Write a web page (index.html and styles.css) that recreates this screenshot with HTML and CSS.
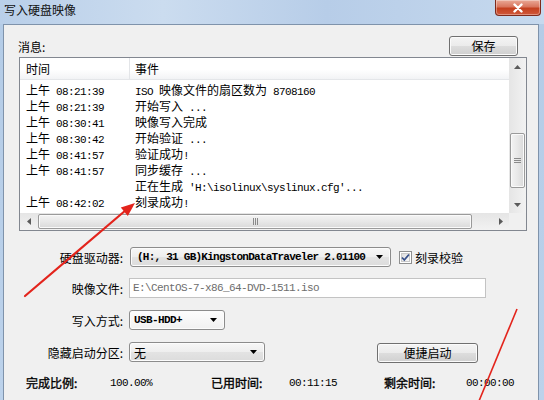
FILE: index.html
```html
<!DOCTYPE html>
<html>
<head>
<meta charset="utf-8">
<title>写入硬盘映像</title>
<link rel="stylesheet" href="styles.css">
</head>
<body>
<div class="window">
  <div class="titlebar">
    <span class="title">写入硬盘映像</span>
    <div class="close">
      <svg width="14" height="10" viewBox="0 0 14 10"><path d="M3.5 1.5 L10.5 8.5 M10.5 1.5 L3.5 8.5" stroke="#fff" stroke-width="2.4" stroke-linecap="round"/></svg>
    </div>
  </div>
  <div class="frame">
    <div class="msg-head">
      <span>消息:</span>
      <div class="btn save">保存</div>
    </div>
    <div class="list">
      <div class="lv">
        <div class="lv-head"><div class="c1">时间</div><div class="c2">事件</div></div>
        <div class="lv-rows">
          <div class="row"><div class="c1">上午<span class="m"> 08:21:39</span></div><div class="c2"><span class="m">ISO </span>映像文件的扇区数为<span class="m"> 8708160</span></div></div>
          <div class="row"><div class="c1">上午<span class="m"> 08:21:39</span></div><div class="c2">开始写入<span class="m"> ...</span></div></div>
          <div class="row"><div class="c1">上午<span class="m"> 08:30:41</span></div><div class="c2">映像写入完成</div></div>
          <div class="row"><div class="c1">上午<span class="m"> 08:30:42</span></div><div class="c2">开始验证<span class="m"> ...</span></div></div>
          <div class="row"><div class="c1">上午<span class="m"> 08:41:57</span></div><div class="c2">验证成功<span class="m">!</span></div></div>
          <div class="row"><div class="c1">上午<span class="m"> 08:41:57</span></div><div class="c2">同步缓存<span class="m"> ...</span></div></div>
          <div class="row"><div class="c1"></div><div class="c2">正在生成<span class="m"> 'H:\isolinux\syslinux.cfg'...</span></div></div>
          <div class="row"><div class="c1">上午<span class="m"> 08:42:02</span></div><div class="c2">刻录成功<span class="m">!</span></div></div>
        </div>
      </div>
      <div class="vscroll">
        <div class="sb-btn"><svg width="7" height="4" viewBox="0 0 7 4"><path d="M0 4 L3.5 0 L7 4 Z" fill="#5a5a5a"/></svg></div>
        <div class="v-track">
          <div class="v-thumb">
            <svg width="7" height="5" viewBox="0 0 7 5"><path d="M0 0.5 H7 M0 2.5 H7 M0 4.5 H7" stroke="#8a8a8a" stroke-width="1"/></svg>
          </div>
        </div>
        <div class="sb-btn"><svg width="7" height="4" viewBox="0 0 7 4"><path d="M0 0 L7 0 L3.5 4 Z" fill="#5a5a5a"/></svg></div>
      </div>
      <div class="hscroll">
        <div class="sb-btn"><svg width="4" height="7" viewBox="0 0 4 7"><path d="M4 0 L0 3.5 L4 7 Z" fill="#5a5a5a"/></svg></div>
        <div class="h-track">
          <div class="h-thumb">
            <svg width="5" height="7" viewBox="0 0 5 7"><path d="M0.5 0 V7 M2.5 0 V7 M4.5 0 V7" stroke="#8a8a8a" stroke-width="1"/></svg>
          </div>
        </div>
        <div class="sb-btn"><svg width="4" height="7" viewBox="0 0 4 7"><path d="M0 0 L4 3.5 L0 7 Z" fill="#5a5a5a"/></svg></div>
      </div>
      <div class="corner"></div>
    </div>

    <div class="frow r1">
      <span class="flabel">硬盘驱动器:</span>
      <div class="combo drive"><span class="m b">(H:, 31 GB)KingstonDataTraveler 2.01100</span><svg class="dd" width="7" height="4" viewBox="0 0 7 4"><path d="M0 0 L7 0 L3.5 4 Z" fill="#000"/></svg></div>
      <div class="check">
        <svg width="13" height="13" viewBox="0 0 13 13">
          <defs><linearGradient id="cg" x1="0" y1="0" x2="1" y2="1"><stop offset="0" stop-color="#dcdcdc"/><stop offset="1" stop-color="#fbfbfb"/></linearGradient></defs>
          <rect x="0.5" y="0.5" width="12" height="12" fill="#fff" stroke="#8e8f8f"/>
          <rect x="2.5" y="2.5" width="8" height="8" fill="url(#cg)" stroke="#c9c9c9"/>
          <path d="M3 6.5 L5.3 9 L10 3.5" fill="none" stroke="#37508a" stroke-width="1.8"/>
        </svg>
        <span>刻录校验</span>
      </div>
    </div>
    <div class="frow r2">
      <span class="flabel">映像文件:</span>
      <div class="input"><span class="m">E:\CentOS-7-x86_64-DVD-1511.iso</span></div>
    </div>
    <div class="frow r3">
      <span class="flabel">写入方式:</span>
      <div class="combo mode"><span class="m b">USB-HDD+</span><svg class="dd" width="7" height="4" viewBox="0 0 7 4"><path d="M0 0 L7 0 L3.5 4 Z" fill="#000"/></svg></div>
    </div>
    <div class="frow r4">
      <span class="flabel">隐藏启动分区:</span>
      <div class="combo hide"><span>无</span><svg class="dd" width="7" height="4" viewBox="0 0 7 4"><path d="M0 0 L7 0 L3.5 4 Z" fill="#000"/></svg></div>
      <div class="btn quick">便捷启动</div>
    </div>

    <div class="status">
      <span class="s1 sl">完成比例:</span>
      <span class="s2 m">100.00%</span>
      <span class="s3 sl">已用时间:</span>
      <span class="s4 m">00:11:15</span>
      <span class="s5 sl">剩余时间:</span>
      <span class="s6 m">00:00:00</span>
    </div>
  </div>

  <svg class="annot" width="544" height="400" viewBox="0 0 544 400">
    <line x1="25" y1="296" x2="126" y2="210" stroke="#e3241c" stroke-width="2.2" stroke-linecap="round"/>
    <polygon points="135,203 127.8,216 120.8,207.6" fill="#e3241c"/>
    <line x1="517" y1="309" x2="479" y2="401" stroke="#e3241c" stroke-width="1.6"/>
  </svg>
</div>
</body>
</html>
```

FILE: styles.css
```css
* { box-sizing: border-box; }
html, body { margin: 0; padding: 0; }
body {
  width: 544px;
  height: 400px;
  overflow: hidden;
  font: 12px "Noto Sans CJK SC", "Liberation Sans", sans-serif;
  color: #000;
  background: #b9d0ea;
}
.window {
  position: relative;
  width: 544px;
  height: 400px;
  display: flex;
  flex-direction: column;
  background: linear-gradient(to bottom, #c9dcf0 0px, #b4cce7 24px, #bcd2eb 100%);
}
.titlebar {
  height: 24px;
  flex: none;
  display: flex;
  justify-content: space-between;
  align-items: flex-start;
  padding: 0 3px 0 4px;
  background: linear-gradient(to right, #b9cfe9 0%, #cbdcef 30%, #b7cde8 60%, #c6d9ee 100%);
}
.title { line-height: 20px; color: #111; }
.close {
  width: 46px;
  height: 16px;
  border: 1px solid #7e2a1c;
  border-top: none;
  border-radius: 0 0 4px 4px;
  background: linear-gradient(to bottom, #eaa997 0%, #d9765e 45%, #c4401f 55%, #d0583b 100%);
  box-shadow: inset 0 0 0 1px rgba(255,255,255,0.35);
  display: flex;
  align-items: center;
  justify-content: center;
}
.frame {
  flex: 1;
  margin: 0 5px 0 3px;
  border: 1px solid #7f93ab;
  border-bottom: none;
  background: #f0f0f0;
  display: flex;
  flex-direction: column;
}
.m {
  font-family: "Liberation Mono", "DejaVu Sans Mono", monospace;
  font-size: 11px;
  letter-spacing: -0.6px;
  white-space: pre;
}
.b { font-weight: bold; }
.msg-head {
  height: 31px;
  padding: 11px 20px 0 14px;
  display: flex;
  justify-content: space-between;
  align-items: center;
}
.btn {
  height: 20px;
  border: 1px solid #707070;
  border-radius: 3px;
  background: linear-gradient(to bottom, #f4f4f4 0%, #ebebeb 50%, #dddddd 51%, #d0d0d0 100%);
  box-shadow: inset 0 0 0 1px #fbfbfb;
  display: flex;
  align-items: center;
  justify-content: center;
  line-height: 16px;
}
.save { width: 69px; }
.list {
  margin: 1px 11px 0 15px;
  height: 174px;
  border: 1px solid #828790;
  background: #fff;
  display: grid;
  grid-template-columns: 1fr 17px;
  grid-template-rows: 1fr 17px;
}
.lv { overflow: hidden; }
.lv-head {
  height: 22px;
  display: flex;
  border-bottom: 1px solid #e4e6e9;
  background: linear-gradient(to bottom, #ffffff 0%, #ffffff 55%, #f2f3f5 100%);
  line-height: 21px;
}
.lv-head .c1 { border-right: 1px solid #e3e5e8; }
.c1 { width: 110px; padding-left: 6px; flex: none; white-space: nowrap; }
.c2 { padding-left: 5px; white-space: nowrap; }
.lv-rows { padding-top: 2px; }
.row { height: 16px; line-height: 16px; display: flex; overflow: hidden; }
.vscroll {
  display: flex;
  flex-direction: column;
  background: linear-gradient(to right, #e5e5e5, #f2f2f2);
}
.sb-btn {
  width: 17px;
  height: 17px;
  flex: none;
  display: flex;
  align-items: center;
  justify-content: center;
}
.v-track { flex: 1; padding-top: 58px; }
.v-thumb {
  margin: 0 1px;
  height: 55px;
  border: 1px solid #9a9a9a;
  border-radius: 2px;
  background: linear-gradient(to right, #f3f3f3 0%, #e8e8e8 50%, #d9d9d9 100%);
  box-shadow: inset 0 0 0 1px #fafafa;
  display: flex;
  align-items: center;
  justify-content: center;
}
.hscroll {
  display: flex;
  background: linear-gradient(to bottom, #e5e5e5, #f2f2f2);
}
.h-track { flex: 1; padding-left: 1px; }
.h-thumb {
  margin-top: 1px;
  width: 434px;
  height: 15px;
  border: 1px solid #9a9a9a;
  border-radius: 2px;
  background: linear-gradient(to bottom, #f3f3f3 0%, #e8e8e8 50%, #d9d9d9 100%);
  box-shadow: inset 0 0 0 1px #fafafa;
  display: flex;
  align-items: center;
  justify-content: center;
}
.corner { background: #f0f0f0; }

.frow {
  height: 20px;
  display: flex;
  align-items: center;
}
.r1 { margin-top: 16px; }
.r2 { margin-top: 11px; }
.r3 { margin-top: 12px; }
.r4 { margin-top: 12px; }
.flabel {
  width: 119px;
  text-align: right;
  margin-right: 6px;
  white-space: nowrap;
}
.combo {
  height: 20px;
  border: 1px solid #8c8c8c;
  border-radius: 3px;
  background: linear-gradient(to bottom, #f7f7f7 0%, #eeeeee 50%, #e3e3e3 51%, #dcdcdc 100%);
  box-shadow: inset 0 0 0 1px #fcfcfc;
  display: flex;
  align-items: center;
  justify-content: space-between;
  padding: 0 7px 0 6px;
}
.drive { width: 261px; margin-left: 1px; }
.drive .m { letter-spacing: -0.75px; }
.mode { width: 96px; background: linear-gradient(to bottom, #fdfdfd, #f1f1f1); padding-left: 4px; }
.hide { width: 136px; padding-left: 4px; }
.check {
  margin-left: 8px;
  display: flex;
  align-items: center;
  gap: 3px;
}
.check svg { display: block; }
.input {
  width: 357px;
  height: 20px;
  border: 1px solid #c3c3c3;
  background: #fff;
  color: #6d6d6d;
  display: flex;
  align-items: center;
  padding-left: 3px;
}
.quick { width: 101px; margin-left: 112px; margin-top: 2px; }
.status {
  margin-top: 13px;
  height: 16px;
  display: flex;
  align-items: center;
  padding-left: 22px;
  line-height: 16px;
}
.sl { font-weight: normal; -webkit-text-stroke: 0.35px #000; }
.s1 { width: 84px; }
.s2 { width: 101px; }
.s3 { width: 78px; }
.s4 { width: 95px; }
.s5 { width: 82px; }
.annot {
  position: absolute;
  left: 0;
  top: 0;
  pointer-events: none;
}
```
